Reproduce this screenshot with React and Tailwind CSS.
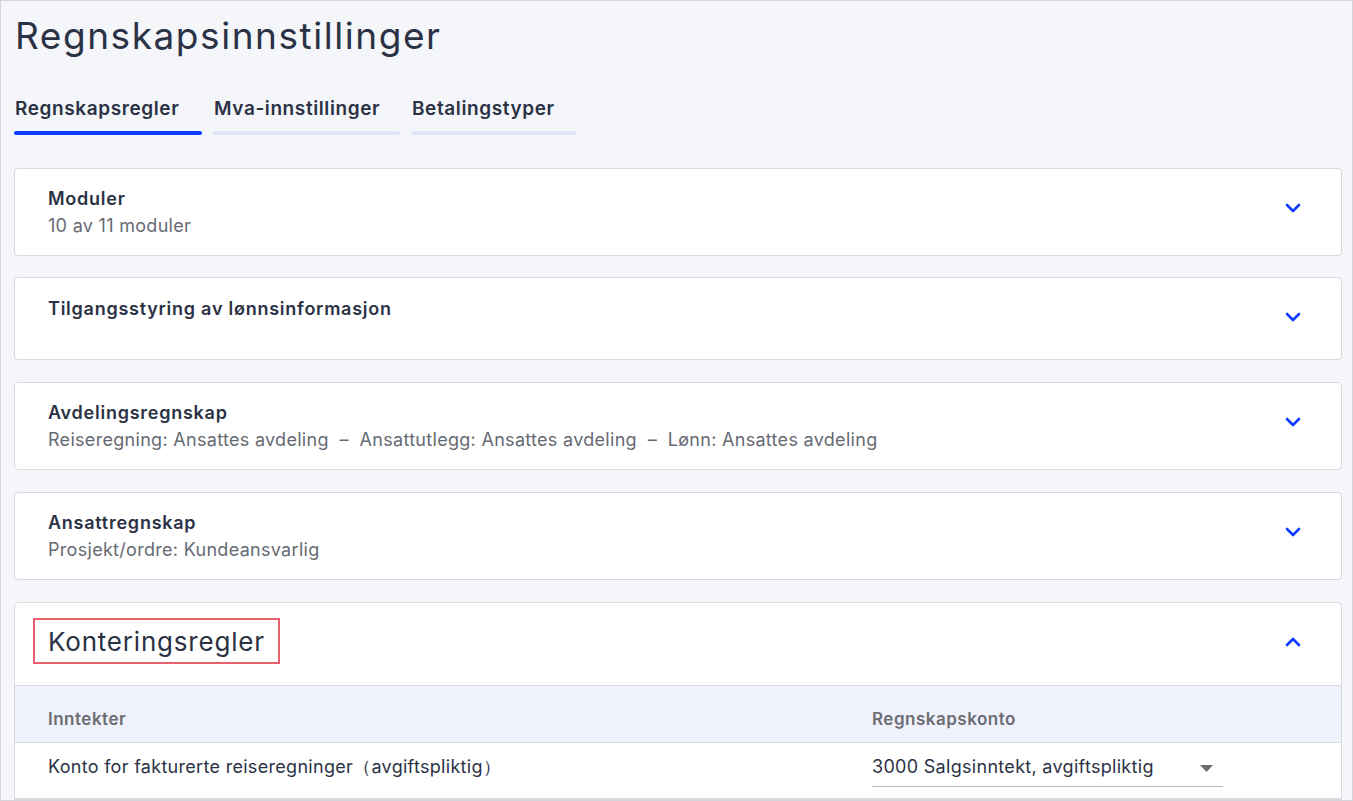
import { ChevronDown, ChevronUp } from "lucide-react";

const font = { fontFamily: "Inter, 'Open Sans', sans-serif" };

function Card({ title, sub }) {
  return (
    <div className="flex items-center justify-between rounded border border-[#d8dae0] bg-white pl-[33px] pr-[36px] h-[88px]">
      <div className="flex flex-col justify-center">
        <div className="text-[18px] font-semibold tracking-[0.75px] text-[#2b3245] leading-[27px] -mt-[1px]">{title}</div>
        <div className="text-[18px] tracking-[0.3px] text-[#666a73] leading-[27px] whitespace-pre">{sub}</div>
      </div>
      <ChevronDown className="w-6 h-6 text-[#0b3cff] -mt-[9px]" strokeWidth={2.6} />
    </div>
  );
}

function Tab({ label, active, w }) {
  return (
    <div className={w}>
      <div className="text-[19px] font-semibold tracking-[0.6px] text-[#2b3245] leading-[24px] pl-[1px]">{label}</div>
      <div className={"mt-[10px] h-[4px] rounded-sm " + (active ? "bg-[#0b3cff]" : "bg-[#e0e4f8]")} />
    </div>
  );
}

export default function App() {
  return (
    <div style={font} className="w-[1353px] h-[801px] overflow-hidden border border-[#d4d5d8] bg-[#f5f6fa]">
      <div className="pl-[13px] pr-[10px]">
        <h1 className="pt-[12px] text-[37px] leading-[46px] text-[#2b3245] pl-[1px] tracking-[1.55px]">Regnskapsinnstillinger</h1>
        <div className="mt-[38px] flex gap-[11px]">
          <Tab label="Regnskapsregler" active w="w-[188px]" />
          <Tab label="Mva-innstillinger" w="w-[187px]" />
          <Tab label="Betalingstyper" w="w-[166px]" />
        </div>

        <div className="mt-[33px] flex flex-col gap-[22px]">
          <Card title="Moduler" sub="10 av 11 moduler" />
          <div className="-mt-[1px] h-[83px] flex items-center justify-between rounded border border-[#d8dae0] bg-white pl-[33px] pr-[36px]">
            <div className="text-[18px] font-semibold tracking-[0.75px] text-[#2b3245] leading-[26px] -mt-[19px]">Tilgangsstyring av lønnsinformasjon</div>
            <ChevronDown className="w-6 h-6 text-[#0b3cff] -mt-[3px]" strokeWidth={2.6} />
          </div>
          <Card
            title="Avdelingsregnskap"
            sub="Reiseregning: Ansattes avdeling  –  Ansattutlegg: Ansattes avdeling  –  Lønn: Ansattes avdeling"
          />
          <Card title="Ansattregnskap" sub="Prosjekt/ordre: Kundeansvarlig" />

          <div className="rounded-t border border-[#d8dae0] bg-white">
            <div className="h-[82px] flex items-start justify-between pt-[15px] pl-[18px] pr-[36px]">
              <div className="border-2 border-[#e8606e] px-[13px] h-[46px] flex items-center text-[26px] tracking-[0.8px] text-[#2b3245]">Konteringsregler</div>
              <ChevronUp className="w-6 h-6 text-[#0b3cff] mt-[12px]" strokeWidth={2.6} />
            </div>
            <div className="grid grid-cols-[824px_1fr] h-[58px] items-start pt-[21px] bg-[#eff2fc] border-y border-[#d8dae0] pl-[33px] text-[17px] leading-[24px] font-semibold tracking-[0.5px] text-[#6b6d73]">
              <div>Inntekter</div>
              <div>Regnskapskonto</div>
            </div>
            <div className="grid grid-cols-[824px_1fr] h-[56px] items-start pt-[12px] border-b border-[#d8dae0] pl-[33px] text-[18px] leading-[24px] tracking-[0.3px] text-[#2b3245]">
              <div>Konto for fakturerte reiseregninger（avgiftspliktig）</div>
              <div className="w-[351px] h-[39px] -mt-[7px] border-b border-[#b9bbc0] flex items-center justify-between pr-[10px]">
                <span>3000 Salgsinntekt, avgiftspliktig</span>
                <svg width="13" height="7" viewBox="0 0 13 7" className="mt-[3px]"><path d="M0 0h13L6.5 7z" fill="#6b6d73" /></svg>
              </div>
            </div>
          </div>
        </div>
      </div>
    </div>
  );
}
